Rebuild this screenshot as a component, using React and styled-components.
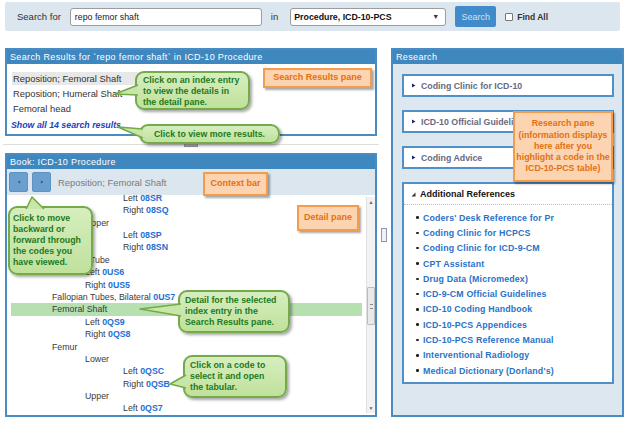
import React from 'react';
import styled, { createGlobalStyle } from 'styled-components';

const GlobalStyle = createGlobalStyle`
  html, body { margin: 0; padding: 0; background: #fff; }
  body { font-family: "Liberation Sans", Arial, sans-serif; color: #333; }
  * { box-sizing: border-box; }
`;

const Page = styled.div`
  position: relative;
  width: 624px;
  height: 422px;
  overflow: hidden;
  padding-top: 2px;
`;

/* ---------- search bar ---------- */
const TopBar = styled.div`
  display: flex;
  align-items: center;
  height: 29px;
  margin: 0 4px 0 5px;
  padding-left: 12px;
  background: #dce6ee;
  border-radius: 2px;
`;

const Label = styled.span`
  font-size: 9.5px;
  color: #333;
  margin: ${p => p.$m || '0'};
`;

const TextInput = styled.div`
  width: 192px;
  height: 18px;
  margin-left: 9px;
  padding-left: 4px;
  border: 1px solid #9c9c9c;
  border-radius: 3px;
  background: #fff;
  font-size: 8.8px;
  line-height: 16px;
  color: #222;
`;

const Select = styled.div`
  width: 156px;
  height: 18px;
  display: flex;
  align-items: center;
  justify-content: space-between;
  padding: 0 6px 0 3px;
  border: 1px solid #9c9c9c;
  border-radius: 3px;
  background: #fff;
  font-size: 8.8px;
  font-weight: bold;
  color: #111;
`;

const Caret = styled.span`
  font-size: 7px;
  color: #334;
`;

const SearchButton = styled.div`
  margin-left: 9px;
  width: 41px;
  height: 21px;
  display: flex;
  align-items: center;
  justify-content: center;
  background: #428bca;
  border-radius: 2px;
  color: #cfe1f2;
  font-size: 9px;
`;

const CheckBox = styled.span`
  margin-left: 9px;
  width: 8px;
  height: 8px;
  border: 1px solid #777;
  border-radius: 1px;
  background: #fff;
`;

const CheckLabel = styled.span`
  margin-left: 4px;
  font-size: 8.5px;
  font-weight: bold;
  color: #333;
`;

/* ---------- panels ---------- */
const Main = styled.div`
  display: flex;
  height: 369px;
  margin-top: 17px;
  padding-left: 5px;
`;

const LeftCol = styled.div`
  width: 372px;
  display: flex;
  flex-direction: column;
`;

const Gutter = styled.div`
  width: 14px;
  display: flex;
  justify-content: center;
  padding-top: 180px;
`;

const GutterHandle = styled.div`
  width: 6px;
  height: 14px;
  border: 1px solid #8d9bab;
  background: #eef2f6;
`;

const Panel = styled.section`
  display: flex;
  flex-direction: column;
  border: 2px solid #4a8bc3;
  background: ${p => p.$bg || '#fff'};
  ${p => (p.$h ? `height: ${p.$h}px;` : 'flex: 1;')}
  ${p => (p.$w ? `width: ${p.$w}px;` : '')}
  overflow: hidden;
`;

const PanelHeader = styled.div`
  flex-shrink: 0;
  height: 14px;
  padding-left: 3px;
  background: #3f87bf;
  color: #fff;
  font-size: 9px;
  line-height: 14px;
  letter-spacing: 0.35px;
  white-space: nowrap;
`;

const ResultsBody = styled.div`
  padding: 7.5px 0 0 5px;
`;

const ResultRow = styled.div`
  width: 223px;
  height: 13px;
  margin-bottom: 2px;
  padding-left: 1px;
  font-size: 9.4px;
  line-height: 13px;
  color: #333;
  background: ${p => (p.$selected ? '#e8e8e8' : 'transparent')};
  white-space: nowrap;
`;

const ShowAll = styled.div`
  margin: 4px 0 0 -1px;
  font-size: 8.8px;
  font-weight: bold;
  font-style: italic;
  color: #2340bd;
  line-height: 13px;
`;

const HSplit = styled.div`
  height: 17px;
  padding-top: 8px;
`;

const SplitLine = styled.div`
  height: 1px;
  margin: 0 -2px;
  background: #dedede;
  display: flex;
  justify-content: center;
  align-items: center;
`;

const Grip = styled.div`
  width: 14px;
  height: 4px;
  background: #b4b4b4;
  border: 1px solid #9a9a9a;
`;

const ContextBar = styled.div`
  flex-shrink: 0;
  height: 26px;
  display: flex;
  align-items: center;
  gap: 4px;
  padding-left: 2px;
  background: #dce6ef;
`;

const NavButton = styled.div`
  width: 19px;
  height: 20px;
  display: flex;
  align-items: center;
  justify-content: center;
  background: #6b9fcd;
  border: 1px solid #5d92c2;
  border-radius: 2px;
`;

const ContextText = styled.span`
  margin-left: 3px;
  font-size: 9.4px;
  color: #7a7a7a;
`;

const DetailArea = styled.div`
  flex: 1;
  display: flex;
  overflow: hidden;
`;

const DetailList = styled.div`
  flex: 1;
  overflow: hidden;
  padding: 0 4px 0 4px;
`;

const Lines = styled.div`
  margin-top: -3.2px;
`;

const indents = [41, 74, 112];

const Line = styled.div`
  height: 12.4px;
  line-height: 12.4px;
  padding-left: ${p => indents[p.$level]}px;
  font-size: 8.8px;
  color: #3a3a3a;
  background: ${p => (p.$active ? '#b7e0b1' : 'transparent')};
  white-space: nowrap;
`;

const Code = styled.span`
  font-weight: bold;
  color: #1d70d4;
`;

const ScrollTrack = styled.div`
  width: 9px;
  margin: 2px 0;
  display: flex;
  flex-direction: column;
  align-items: center;
  background: #f2f2f2;
  border-left: 1px solid #e0e0e0;
`;

const ScrollArrow = styled.div`
  height: 10px;
  font-size: 5px;
  line-height: 10px;
  color: #666;
`;

const ScrollSpace = styled.div`
  flex: 1;
`;

const Thumb = styled.div`
  width: 8px;
  height: 38px;
  margin-top: 80px;
  display: flex;
  align-items: center;
  justify-content: center;
  background: #e9e9e9;
  border: 1px solid #bcbcbc;
  border-radius: 1px;
`;

const ThumbGrip = styled.div`
  width: 3px;
  height: 5px;
  border-top: 1px solid #888;
  border-bottom: 1px solid #888;
`;

/* ---------- research ---------- */
const ResearchBody = styled.div`
  flex: 1;
  padding: 10px 8px 0 9px;
`;

const AccItem = styled.div`
  height: 23px;
  margin-bottom: 13px;
  display: flex;
  align-items: center;
  padding-left: 7px;
  border: 2px solid #4f90c8;
  background: #fff;
`;

const AccTitle = styled.span`
  margin-left: 5px;
  font-size: 8.8px;
  font-weight: bold;
  color: #686a82;
  white-space: nowrap;
`;

const OpenItem = styled.div`
  border: 2px solid #4f90c8;
  background: #fff;
`;

const OpenHeader = styled.div`
  height: 21px;
  display: flex;
  align-items: center;
  padding-left: 7px;
  border-bottom: 1px dotted #bdbdbd;
`;

const OpenTitle = styled.span`
  margin-left: 4px;
  font-size: 9px;
  font-weight: bold;
  color: #111;
`;

const RefList = styled.ul`
  list-style: none;
  margin: 0;
  padding: 5px 0 4px 12px;
`;

const RefItem = styled.li`
  height: 15.3px;
  display: flex;
  align-items: center;
  font-size: 8.8px;
  font-weight: bold;
  letter-spacing: 0.15px;
  color: #2a72c8;
  white-space: nowrap;

  &::before {
    content: '';
    width: 2.5px;
    height: 2.5px;
    margin-right: 4.5px;
    border-radius: 50%;
    background: #222;
  }
`;

/* ---------- callouts ---------- */
const Note = styled.div`
  position: absolute;
  left: ${p => p.$x}px;
  top: ${p => p.$y}px;
  width: ${p => p.$w}px;
  height: ${p => p.$h}px;
  display: flex;
  align-items: center;
  justify-content: center;
  text-align: center;
  background: #fcd4b2;
  border: 2px solid #f39c4e;
  box-shadow: 2px 2px 2px rgba(0, 0, 0, 0.35);
  color: #e4700f;
  font-size: ${p => p.$fs || 9}px;
  font-weight: bold;
  line-height: 11.3px;
  white-space: nowrap;
`;

const Bubble = styled.div`
  position: absolute;
  left: ${p => p.$x}px;
  top: ${p => p.$y}px;
  width: ${p => p.$w}px;
  height: ${p => p.$h}px;
  padding: ${p => p.$pad};
  ${p => (p.$center ? 'display: flex; align-items: center; justify-content: center;' : '')}
  background: linear-gradient(#d6eebf, #c0e19c);
  border: 2px solid #74aa4a;
  border-radius: 9px;
  box-shadow: 2px 2px 3px rgba(0, 0, 0, 0.35);
  color: #237a1d;
  font-size: 8.8px;
  font-weight: bold;
  line-height: 11px;
  white-space: nowrap;
`;

const TailSvg = styled.svg`
  position: absolute;
  left: -2px;
  top: -2px;
  overflow: visible;
`;

const Tail = ({ pts }) => {
  const [a, t, b] = pts;
  return (
    <TailSvg width="1" height="1">
      <polygon points={`${a} ${t} ${b}`} fill="#c9e6a9" />
      <polyline points={`${a} ${t} ${b}`} fill="none" stroke="#74aa4a" strokeWidth="1.6" strokeLinejoin="round" />
    </TailSvg>
  );
};

const Tri = ({ dir, color, size = 5 }) => (
  <svg width={size} height={size} viewBox="0 0 10 10">
    {dir === 'right' && <polygon points="2,1 9,5 2,9" fill={color} />}
    {dir === 'left' && <polygon points="8,1 1,5 8,9" fill={color} />}
    {dir === 'open' && <polygon points="9,1 9,9 1,9" fill={color} />}
  </svg>
);

const detailLines = [
  { level: 2, text: 'Left', code: '08SR' },
  { level: 2, text: 'Right', code: '08SQ' },
  { level: 1, text: 'Upper' },
  { level: 2, text: 'Left', code: '08SP' },
  { level: 2, text: 'Right', code: '08SN' },
  { level: 0, text: 'Fallopian Tube' },
  { level: 1, text: 'Left', code: '0US6' },
  { level: 1, text: 'Right', code: '0US5' },
  { level: 0, text: 'Fallopian Tubes, Bilateral', code: '0US7' },
  { level: 0, text: 'Femoral Shaft', active: true },
  { level: 1, text: 'Left', code: '0QS9' },
  { level: 1, text: 'Right', code: '0QS8' },
  { level: 0, text: 'Femur' },
  { level: 1, text: 'Lower' },
  { level: 2, text: 'Left', code: '0QSC' },
  { level: 2, text: 'Right', code: '0QSB' },
  { level: 1, text: 'Upper' },
  { level: 2, text: 'Left', code: '0QS7' },
];

const references = [
  "Coders' Desk Reference for Pr",
  'Coding Clinic for HCPCS',
  'Coding Clinic for ICD-9-CM',
  'CPT Assistant',
  'Drug Data (Micromedex)',
  'ICD-9-CM Official Guidelines',
  'ICD-10 Coding Handbook',
  'ICD-10-PCS Appendices',
  'ICD-10-PCS Reference Manual',
  'Interventional Radiology',
  "Medical Dictionary (Dorland's)",
];

const App = () => {
  return (
    <Page>
      <GlobalStyle />
      <TopBar>
        <Label>Search for</Label>
        <TextInput>repo femor shaft</TextInput>
        <Label $m="0 12px 0 9px">in</Label>
        <Select>
          <span>Procedure, ICD-10-PCS</span>
          <Caret>▼</Caret>
        </Select>
        <SearchButton>Search</SearchButton>
        <CheckBox />
        <CheckLabel>Find All</CheckLabel>
      </TopBar>

      <Main>
        <LeftCol>
          <Panel $h={88}>
            <PanelHeader>Search Results for `repo femor shaft` in ICD-10 Procedure</PanelHeader>
            <ResultsBody>
              <ResultRow $selected>Reposition; Femoral Shaft</ResultRow>
              <ResultRow>Reposition; Humeral Shaft</ResultRow>
              <ResultRow>Femoral head</ResultRow>
              <ShowAll>Show all 14 search results</ShowAll>
            </ResultsBody>
          </Panel>
          <HSplit>
            <SplitLine><Grip /></SplitLine>
          </HSplit>
          <Panel>
            <PanelHeader>Book: ICD-10 Procedure</PanelHeader>
            <ContextBar>
              <NavButton><Tri dir="left" color="#2f5f8e" size={4} /></NavButton>
              <NavButton><Tri dir="right" color="#2f5f8e" size={4} /></NavButton>
              <ContextText>Reposition; Femoral Shaft</ContextText>
            </ContextBar>
            <DetailArea>
              <DetailList>
                <Lines>
                  {detailLines.map((l, i) => (
                    <Line key={i} $level={l.level} $active={l.active}>
                      {l.text}
                      {l.code && <> <Code>{l.code}</Code></>}
                    </Line>
                  ))}
                </Lines>
              </DetailList>
              <ScrollTrack>
                <ScrollArrow>▲</ScrollArrow>
                <Thumb><ThumbGrip /></Thumb>
                <ScrollSpace />
                <ScrollArrow>▼</ScrollArrow>
              </ScrollTrack>
            </DetailArea>
          </Panel>
        </LeftCol>

        <Gutter>
          <GutterHandle />
        </Gutter>

        <Panel $w={229} $bg="#dde7ef">
          <PanelHeader>Research</PanelHeader>
          <ResearchBody>
            <AccItem><Tri dir="right" color="#1b2a6b" size={5} /><AccTitle>Coding Clinic for ICD-10</AccTitle></AccItem>
            <AccItem><Tri dir="right" color="#1b2a6b" size={5} /><AccTitle>ICD-10 Official Guidelines</AccTitle></AccItem>
            <AccItem><Tri dir="right" color="#1b2a6b" size={5} /><AccTitle>Coding Advice</AccTitle></AccItem>
            <OpenItem>
              <OpenHeader>
                <Tri dir="open" color="#333" size={5} />
                <OpenTitle>Additional References</OpenTitle>
              </OpenHeader>
              <RefList>
                {references.map(r => <RefItem key={r}>{r}</RefItem>)}
              </RefList>
            </OpenItem>
          </ResearchBody>
        </Panel>
      </Main>

      <Note $x={263} $y={68} $w={109} $h={20}>Search Results pane</Note>
      <Note $x={203} $y={172} $w={65} $h={24}>Context bar</Note>
      <Note $x={297} $y={205} $w={62} $h={26}>Detail pane</Note>
      <Note $x={513} $y={111} $w={100} $h={71} $fs={8.8}>
        Research pane<br />(information displays<br />here after you<br />highlight a code in the<br />ICD-10-PCS table)
      </Note>

      <Bubble $x={135} $y={71} $w={115} $h={39} $pad="1.5px 0 0 6px">
        Click on an index entry<br />to view the details in<br />the detail pane.
        <Tail pts={['3,14', '-20,23', '3,24']} />
      </Bubble>
      <Bubble $x={139} $y={124} $w={141} $h={20} $center>
        Click to view more results.
        <Tail pts={['4,5', '-21,3', '4,14']} />
      </Bubble>
      <Bubble $x={8} $y={206} $w={85} $h={69} $pad="4.5px 0 0 3px">
        Click to move<br />backward or<br />forward through<br />the codes you<br />have viewed.
        <Tail pts={['18,3', '24,-9', '36,3']} />
      </Bubble>
      <Bubble $x={178} $y={290} $w={112} $h={43} $pad="2.5px 0 0 5px">
        Detail for the selected<br />index entry in the<br />Search Results pane.
        <Tail pts={['3,14', '-38,19', '3,26']} />
      </Bubble>
      <Bubble $x={183} $y={355} $w={104} $h={43} $pad="2.5px 0 0 5px">
        Click on a code to<br />select it and open<br />the tabular.
        <Tail pts={['3,20', '-13,29', '3,33']} />
      </Bubble>
    </Page>
  );
};

export default App;
